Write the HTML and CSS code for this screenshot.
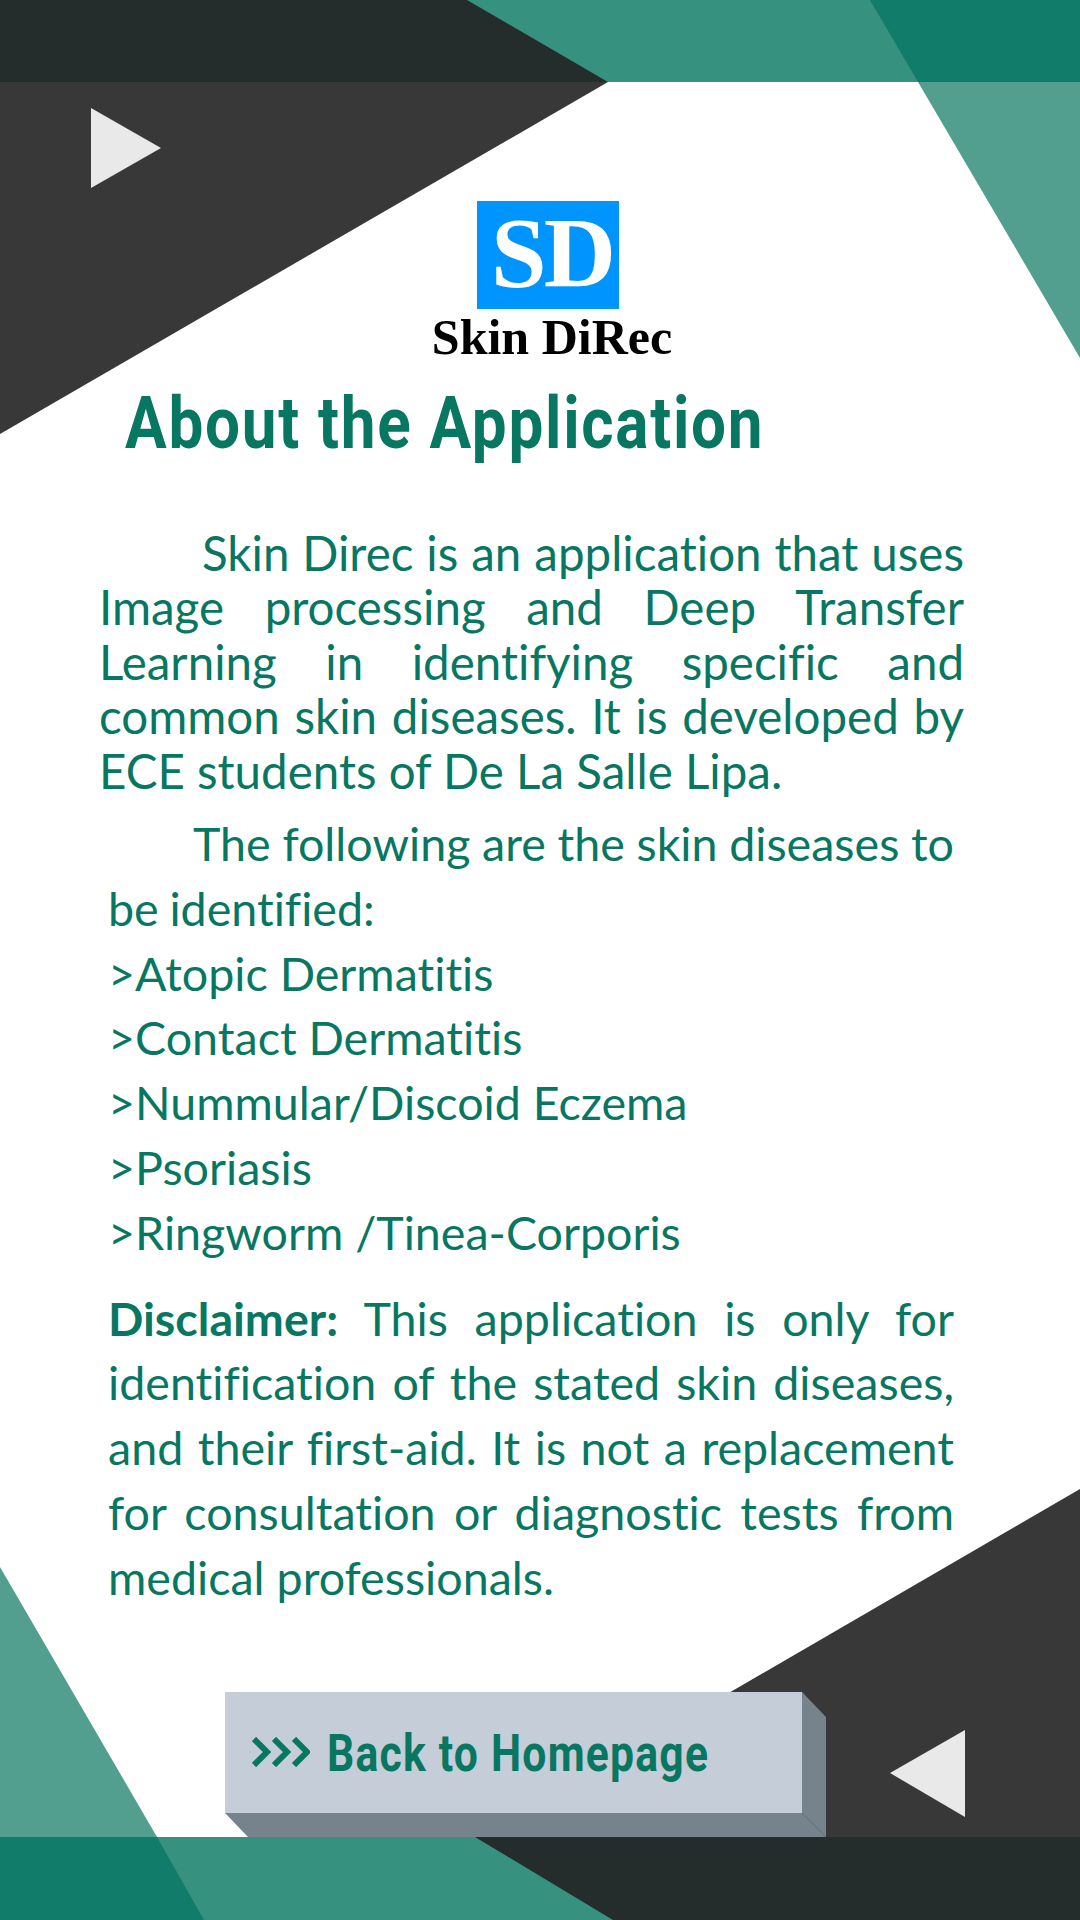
FILE: index.html
```html
<!DOCTYPE html>
<html lang="en">
<head>
<meta charset="utf-8">
<title>About the Application</title>
<link rel="stylesheet" href="styles.css">
</head>
<body>
<div class="page">
  <svg class="backdrop" viewBox="0 0 1080 1920" width="1080" height="1920" aria-hidden="true">
    <rect class="c-teal" x="467" y="0" width="613" height="82"/>
    <polygon class="c-deep" points="870,0 1080,0 1080,82 918,82"/>
    <polygon class="c-soft" points="918,82 1080,82 1080,358"/>
    <polygon class="c-ink" points="0,0 467,0 608,82 0,82"/>
    <polygon class="c-dark" points="0,82 608,82 0,434"/>
    <polygon class="c-arrow" points="91,108 161,148 91,188"/>
    <polygon class="c-soft" points="0,1567 157,1837 0,1837"/>
    <rect class="c-teal" x="0" y="1837" width="620" height="83"/>
    <polygon class="c-deep" points="0,1837 157,1837 204,1920 0,1920"/>
    <polygon class="c-ink" points="475,1837 1080,1837 1080,1920 613,1920"/>
    <polygon class="c-dark" points="1080,1489 1080,1837 481,1837"/>
    <polygon class="c-arrow" points="965,1730 890,1773 965,1817"/>
    <polygon class="c-side" points="802,1692 826,1717 826,1837 802,1813"/>
    <polygon class="c-side" points="225,1813 802,1813 826,1837 248,1837"/>
  </svg>
  <main class="content">
    <header class="brand">
      <div class="brand-mark">SD</div>
      <div class="brand-name">Skin DiRec</div>
    </header>
    <h1 class="title">About the Application</h1>
    <p class="intro">Skin Direc is an application that uses Image processing and Deep Transfer Learning in identifying specific and common skin diseases. It is developed by ECE students of De La Salle Lipa.</p>
    <p class="lead">The following are the skin diseases to be identified:</p>
    <ul class="diseases">
      <li>&gt;Atopic Dermatitis</li>
      <li>&gt;Contact Dermatitis</li>
      <li>&gt;Nummular/Discoid Eczema</li>
      <li>&gt;Psoriasis</li>
      <li>&gt;Ringworm /Tinea-Corporis</li>
    </ul>
    <p class="disclaimer"><strong>Disclaimer:</strong> This application is only for identification of the stated skin diseases, and their first-aid. It is not a replacement for consultation or diagnostic tests from medical professionals.</p>
    <a class="back" href="#">
      <svg class="chevrons" viewBox="0 0 58 30" width="58" height="30" aria-hidden="true">
        <path d="M2 2 L15 15 L2 28 M22 2 L35 15 L22 28 M42 2 L55 15 L42 28"/>
      </svg>
      <span class="back-label">Back to Homepage</span>
    </a>
  </main>
</div>
</body>
</html>
```
FILE: styles.css
```css
* { box-sizing: border-box; }
html, body { margin: 0; padding: 0; }
body { background: #fff; font-family: "Lato", "Liberation Sans", sans-serif; color: #087762; font-variant-ligatures: none; }
.page { position: relative; width: 1080px; height: 1920px; overflow: hidden; background: #fff; }
.backdrop { position: absolute; inset: 0; display: block; }
.c-teal { fill: #37917f; }
.c-deep { fill: #127c6b; }
.c-soft { fill: #529e8f; }
.c-ink { fill: #242d2b; }
.c-dark { fill: #383838; }
.c-arrow { fill: #e9e9e9; }
.c-side { fill: #76828c; }

.content { position: relative; display: flex; flex-direction: column; padding-top: 201px; height: 100%; }
.brand { display: flex; flex-direction: column; align-items: center; width: 1096px; }
.brand-mark { width: 142px; height: 108px; padding: 0 0 5px 8px; background: #0094ff; color: #fff; display: flex; align-items: center; justify-content: center; font-family: "Liberation Serif", serif; font-weight: 700; font-size: 100px; line-height: 103px; letter-spacing: -3px; }
.brand-name { margin-top: 6px; padding-left: 8px; color: #000; font-family: "Liberation Serif", serif; font-weight: 700; font-size: 50px; line-height: 44px; white-space: nowrap; }
.title { margin: 23px 0 0 125px; width: max-content; font-family: "Roboto", sans-serif; font-weight: 700; font-size: 73px; line-height: 82px; letter-spacing: 2px; transform: scaleX(0.85); transform-origin: left center; white-space: nowrap; }
.intro { margin: 62px 0 0 99px; width: 865px; font-size: 47.5px; line-height: 54.4px; text-align: justify; text-indent: 103px; }
.lead { margin: 13px 0 0 108px; width: 846px; font-size: 46.6px; line-height: 64.8px; word-spacing: -1.2px; text-align: justify; text-indent: 85px; }
.diseases { margin: 0 0 0 108px; padding: 0; list-style: none; font-size: 46.6px; line-height: 64.8px; }
.disclaimer { margin: 21px 0 0 108px; width: 846px; font-size: 46.6px; line-height: 64.8px; text-align: justify; }
.disclaimer strong { font-weight: 700; }
.back { margin: 82px 0 0 225px; width: 577px; height: 121px; background: #c5cdd8; color: #087762; display: flex; align-items: center; gap: 17px; padding: 0 0 0 27px; text-decoration: none; }
.chevrons { display: block; flex: none; }
.chevrons path { fill: none; stroke: #087762; stroke-width: 6; }
.back-label { margin-top: 4px; font-family: "Roboto", sans-serif; font-weight: 700; font-size: 52px; line-height: 60px; letter-spacing: 1.5px; transform: scaleX(0.82); transform-origin: left center; white-space: nowrap; }
```
